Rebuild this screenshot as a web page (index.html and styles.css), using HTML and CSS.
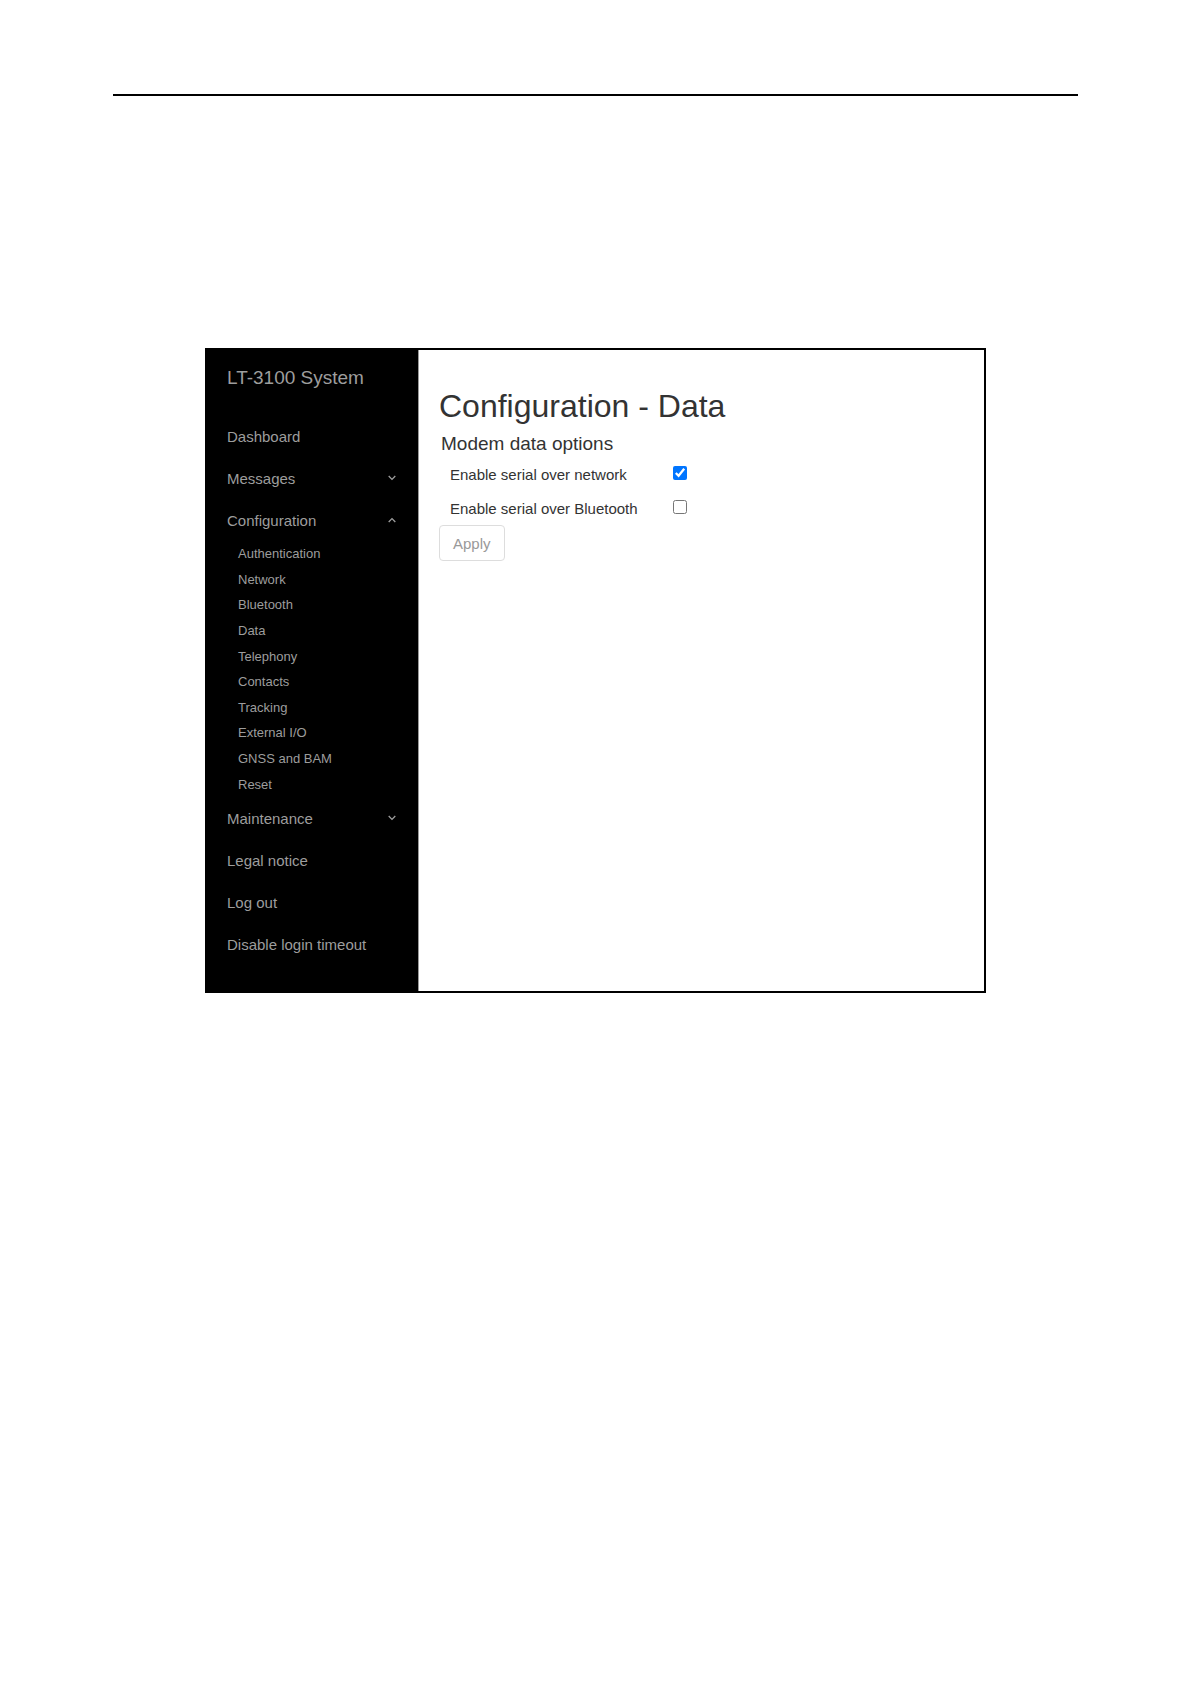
FILE: index.html
```
<!DOCTYPE html>
<html lang="en">
<head>
  <meta charset="UTF-8" />
  <meta name="viewport" content="width=device-width, initial-scale=1.0"/>
  <title>LT-3100 System - Configuration - Data</title>
  <link rel="stylesheet" href="styles.css">
</head>
<body>
  <hr class="page-rule">

  <div class="panel">
    <nav class="sidebar">
      <a class="brand" href="#">LT-3100 System</a>
      <ul class="menu">
        <li><a href="#">Dashboard</a></li>
        <li>
          <a href="#">Messages
            <svg class="chevron" viewBox="0 0 8 6"><path d="M0.7 1l3.3 3.4L7.3 1"/></svg>
          </a>
        </li>
        <li>
          <a href="#">Configuration
            <svg class="chevron" viewBox="0 0 8 6"><path d="M0.7 5l3.3-3.4L7.3 5"/></svg>
          </a>
          <ul class="submenu">
            <li><a href="#">Authentication</a></li>
            <li><a href="#">Network</a></li>
            <li><a href="#">Bluetooth</a></li>
            <li><a href="#">Data</a></li>
            <li><a href="#">Telephony</a></li>
            <li><a href="#">Contacts</a></li>
            <li><a href="#">Tracking</a></li>
            <li><a href="#">External I/O</a></li>
            <li><a href="#">GNSS and BAM</a></li>
            <li><a href="#">Reset</a></li>
          </ul>
        </li>
        <li>
          <a href="#">Maintenance
            <svg class="chevron" viewBox="0 0 8 6"><path d="M0.7 1l3.3 3.4L7.3 1"/></svg>
          </a>
        </li>
        <li><a href="#">Legal notice</a></li>
        <li><a href="#">Log out</a></li>
        <li><a href="#">Disable login timeout</a></li>
      </ul>
    </nav>

    <main class="content">
      <h1>Configuration - Data</h1>
      <form>
        <h2>Modem data options</h2>
        <div class="option">
          <label for="serialNetwork">Enable serial over network</label>
          <input type="checkbox" id="serialNetwork" checked>
        </div>
        <div class="option">
          <label for="serialBluetooth">Enable serial over Bluetooth</label>
          <input type="checkbox" id="serialBluetooth">
        </div>
        <button type="button" class="apply-btn">Apply</button>
      </form>
    </main>
  </div>
</body>
</html>
```

FILE: styles.css
```
* {
  box-sizing: border-box;
}
body {
  margin: 0;
  background-color: #fff;
  font-family: "Liberation Sans", Arial, sans-serif;
  font-size: 15px;
  color: #333;
}
.page-rule {
  width: 81%;
  height: 2px;
  margin: 94px auto 252px;
  border: none;
  background-color: #000;
}
.panel {
  display: flex;
  width: 92%;
  max-width: 781px;
  margin: 0 auto 40px;
  border: 2px solid #000;
}

/* Sidebar */
.sidebar {
  flex: 0 0 212px;
  padding-bottom: 26px;
  background-color: #000;
  border-right: 1px solid #999;
}
.sidebar a {
  display: flex;
  align-items: center;
  justify-content: space-between;
  color: #9d9d9d;
  text-decoration: none;
}
.sidebar a:hover {
  color: #fff;
}
.sidebar .brand {
  height: 56px;
  margin-bottom: 9px;
  padding: 0 20px;
  font-size: 19px;
}
.menu,
.submenu {
  margin: 0;
  padding: 0;
  list-style: none;
}
.menu a {
  height: 42px;
  padding: 0 22px 0 20px;
}
.submenu {
  display: grid;
  grid-auto-rows: 1fr;
  height: 256px;
}
.menu .submenu a {
  height: 100%;
  padding: 0 31px;
  font-size: 13px;
}
.chevron {
  width: 8px;
  height: 6px;
  fill: none;
  stroke: #9d9d9d;
  stroke-width: 1.3;
}

/* Content */
.content {
  flex: 1;
  padding: 38px 20px 20px;
}
h1 {
  margin: 0 0 8px;
  font-size: 32px;
  font-weight: normal;
  line-height: 36px;
}
h2 {
  margin: 0 2px 2px;
  font-size: 19px;
  font-weight: normal;
  line-height: 23px;
}
.option {
  display: flex;
  align-items: center;
  height: 34px;
  padding-left: 11px;
}
.option label {
  flex: 0 1 223px;
}
.option input {
  width: 14px;
  height: 14px;
  margin: 0 0 2px;
}
.apply-btn {
  height: 36px;
  padding: 0 13px;
  background-color: #fff;
  border: 1px solid #ddd;
  border-radius: 4px;
  color: #999;
  font-family: inherit;
  font-size: 15px;
  cursor: pointer;
}
.apply-btn:hover {
  background-color: #f5f5f5;
}
```
